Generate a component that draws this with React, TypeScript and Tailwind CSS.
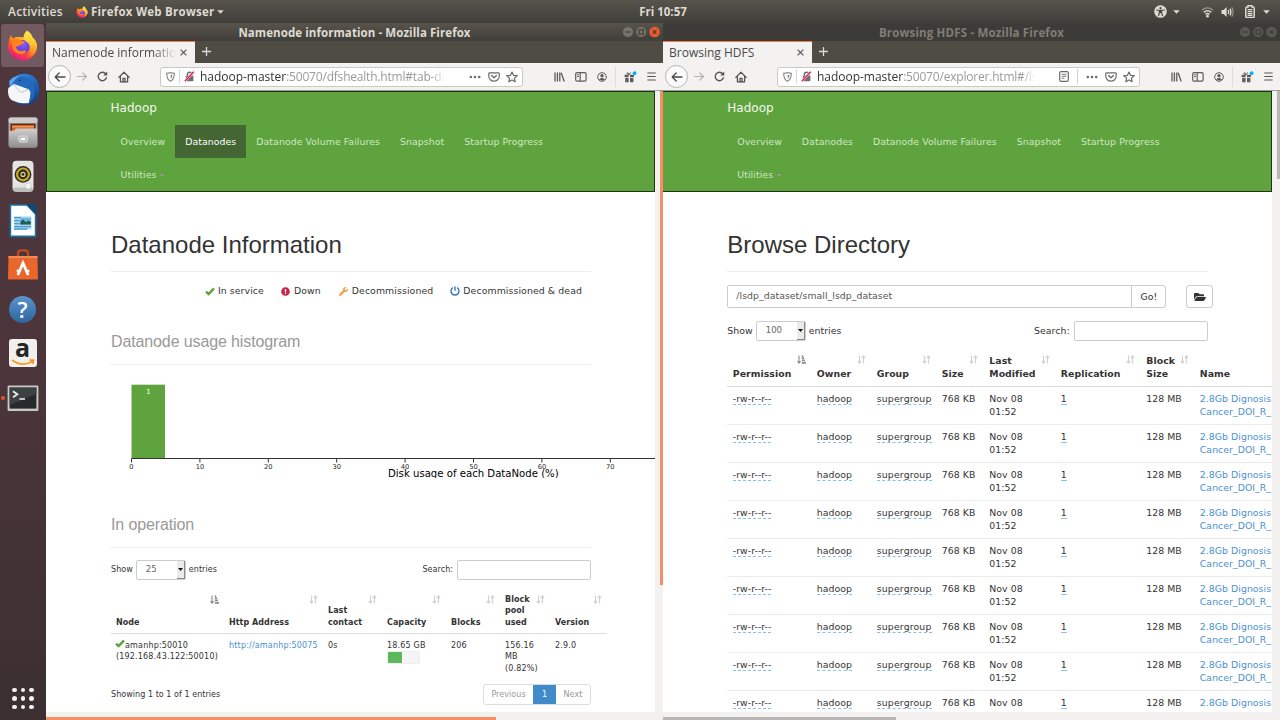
import React from "react";
import { FaExclamationCircle, FaWrench, FaFolderOpen } from "react-icons/fa";

type Kids = { children?: React.ReactNode };

/* ---------- small glyphs ---------- */

function SortBoth() {
  return (
    <svg width="9" height="9" viewBox="0 0 9 9" fill="none" stroke="#d2d2d2" strokeWidth="1.2">
      <path d="M2.5 0.5V8M0.8 6L2.5 8L4.2 6M6.5 8.5V1M4.8 3L6.5 1L8.2 3" />
    </svg>
  );
}

function SortAsc() {
  return (
    <svg width="9" height="9" viewBox="0 0 9 9" fill="none" stroke="#8d8d8d" strokeWidth="1.1">
      <path d="M2 0.5V8M0.4 6.2L2 8.2L3.6 6.2" />
      <path d="M4.8 1.2H6.2M4.8 3.2H7M4.8 5.4H8M4.8 7.8H9" strokeWidth="1.7" />
    </svg>
  );
}

function Tick({ className }: { className: string }) {
  return (
    <svg width="10" height="9" viewBox="0 0 10 9" className={className} fill="none" stroke="#5fa33e" strokeWidth="2.4">
      <path d="M1 4.6L3.6 7L9 1.4" />
    </svg>
  );
}

function Power({ className }: { className: string }) {
  return (
    <svg width="10" height="10" viewBox="0 0 10 10" className={className} fill="none" stroke="#3478b4" strokeWidth="1.4">
      <path d="M2.8 1.7A4 4 0 1 0 7.2 1.7M5 0.4V4.8" />
    </svg>
  );
}

function Back() {
  return (
    <svg width="12" height="12" viewBox="0 0 12 12" fill="none" stroke="#4a4a4a" strokeWidth="1.3" strokeLinecap="round" strokeLinejoin="round">
      <path d="M11 6H1.4M5.2 2L1.2 6L5.2 10" />
    </svg>
  );
}

function Forward() {
  return (
    <svg width="12" height="11" viewBox="0 0 12 12" fill="none" stroke="#b3b2b0" strokeWidth="1.3" strokeLinecap="round" strokeLinejoin="round">
      <path d="M1 6H10.6M6.8 2L10.8 6L6.8 10" />
    </svg>
  );
}

function Reload() {
  return (
    <svg width="11" height="11" viewBox="0 0 12 12" fill="none" stroke="#555" strokeWidth="1.5" strokeLinecap="round">
      <path d="M10.3 7.4A4.6 4.6 0 1 1 9.6 3.2" />
      <path d="M11.2 0.6V5H6.8Z" fill="#555" stroke="none" />
    </svg>
  );
}

function Home() {
  return (
    <svg width="12" height="12" viewBox="0 0 12 12" fill="none" stroke="#555" strokeWidth="1.3" strokeLinecap="round" strokeLinejoin="round">
      <path d="M0.8 6.4L6 1.2L11.2 6.4M2.4 5.6V10.9H9.6V5.6" />
      <path d="M5 10.8V7.4H7V10.8" />
    </svg>
  );
}

function Shield() {
  return (
    <svg width="9" height="10" viewBox="0 0 9 10" fill="none" stroke="#858585" strokeWidth="1.1">
      <path d="M0.7 1.2C2.6 1.2 3.4 0.9 4.5 0.6C5.6 0.9 6.4 1.2 8.3 1.2C8.3 5.6 7.5 7.8 4.5 9.3C1.5 7.8 0.7 5.6 0.7 1.2Z" />
      <path d="M4.7 2.8V6.9C5.9 6 6.3 4.8 6.4 3.1Z" fill="#858585" stroke="none" />
    </svg>
  );
}

function LockSlash() {
  return (
    <svg width="11" height="11" viewBox="0 0 11 11" fill="none">
      <rect x="1.8" y="4.8" width="7.6" height="5.4" rx="0.8" fill="#6f6f6f" />
      <path d="M3.4 5V3.4A2.2 2.2 0 0 1 7.8 3.4V5" stroke="#6f6f6f" strokeWidth="1.4" />
      <path d="M0.8 10.2L9.8 0.8" stroke="#ffffff" strokeWidth="2.2" />
      <path d="M0.8 10.2L9.8 0.8" stroke="#f0134f" strokeWidth="1.4" />
    </svg>
  );
}

function Dots() {
  return (
    <svg width="12" height="4" viewBox="0 0 12 4" fill="#6b6b6b">
      <circle cx="1.8" cy="2" r="1.3" />
      <circle cx="6" cy="2" r="1.3" />
      <circle cx="10.2" cy="2" r="1.3" />
    </svg>
  );
}

function Pocket() {
  return (
    <svg width="12" height="10" viewBox="0 0 12 10" fill="none" stroke="#6b6b6b" strokeWidth="1.2" strokeLinecap="round" strokeLinejoin="round">
      <path d="M1.6 0.8H10.4Q11.2 0.8 11.2 1.6V4.2A5.2 5 0 0 1 0.8 4.2V1.6Q0.8 0.8 1.6 0.8Z" />
      <path d="M3.6 3.6L6 5.8L8.4 3.6" strokeWidth="1.4" />
    </svg>
  );
}

function Star() {
  return (
    <svg width="12" height="12" viewBox="0 0 12 12" fill="none" stroke="#6b6b6b" strokeWidth="1.2" strokeLinejoin="round">
      <path d="M6 1L7.5 4.3L11.2 4.7L8.4 7.1L9.2 10.8L6 8.9L2.8 10.8L3.6 7.1L0.8 4.7L4.5 4.3Z" />
    </svg>
  );
}

function Reader() {
  return (
    <svg width="10" height="11" viewBox="0 0 10 11" fill="none" stroke="#6b6b6b" strokeWidth="1.2">
      <rect x="0.7" y="0.7" width="8.6" height="9.6" rx="1.2" />
      <path d="M2.6 3.3H7.4M2.6 5.3H7.4M2.6 7.3H5.4" strokeWidth="0.9" />
    </svg>
  );
}

function Library() {
  return (
    <svg width="11" height="10" viewBox="0 0 11 10" fill="none" stroke="#5c5c5c" strokeWidth="1.3">
      <path d="M1 0.5V9.5M3.4 0.5V9.5M5.8 0.5V9.5M7.2 0.8L10.2 9.5" />
    </svg>
  );
}

function SidebarIcon() {
  return (
    <svg width="12" height="10" viewBox="0 0 12 10" fill="none" stroke="#5c5c5c" strokeWidth="1.2">
      <rect x="0.7" y="0.7" width="10.4" height="8.4" rx="1.4" />
      <path d="M5.2 0.8V9" />
      <path d="M2 2.8H4M2 4.6H4" strokeWidth="0.9" />
    </svg>
  );
}

function Account() {
  return (
    <svg width="10" height="10" viewBox="0 0 10 10" fill="none">
      <circle cx="5" cy="5" r="4.3" stroke="#5c5c5c" strokeWidth="1" />
      <circle cx="5" cy="3.8" r="1.7" fill="#5c5c5c" />
      <path d="M2 7.4Q5 4.6 8 7.4Q5 9.6 2 7.4Z" fill="#5c5c5c" />
    </svg>
  );
}

function Gift() {
  return (
    <svg width="13" height="12" viewBox="0 0 13 12">
      <path d="M0.6 3.8H4.6V6H0.6ZM6 3.8H10V6H6ZM1.2 6.8H4.6V11.2H1.2ZM6 6.8H9.4V11.2H6Z" fill="#5c5c5c" />
      <path d="M5.2 3.6C3.4 3.6 2.6 2.8 3 2C3.6 1.2 4.8 2 5.2 3.6ZM5.3 3.6C5.6 2 6.4 1.6 7 2" fill="none" stroke="#5c5c5c" strokeWidth="1" />
      <circle cx="10.6" cy="2.2" r="1.9" fill="#00b0ff" />
    </svg>
  );
}

function Menu() {
  return (
    <svg width="9" height="9" viewBox="0 0 9 9" stroke="#555" strokeWidth="1.2">
      <path d="M0.3 1H8.7M0.3 4.5H8.7M0.3 8H8.7" />
    </svg>
  );
}

function Caret({ className }: { className: string }) {
  return (
    <svg width="7" height="4" viewBox="0 0 7 4" className={className}>
      <path d="M0.2 0.3H6.8L3.5 3.8Z" fill="currentColor" />
    </svg>
  );
}

/* ---------- dock icons ---------- */

function FirefoxLogo({ size, id }: { size: number; id: string }) {
  return (
    <svg width={size} height={size} viewBox="0 0 32 32">
      <defs>
        <linearGradient id={id + "a"} x1="0.8" y1="0.05" x2="0.25" y2="0.95">
          <stop offset="0" stopColor="#fff44f" />
          <stop offset="0.35" stopColor="#ff980e" />
          <stop offset="0.65" stopColor="#ff4440" />
          <stop offset="1" stopColor="#e5168a" />
        </linearGradient>
        <radialGradient id={id + "b"} cx="0.5" cy="0.3" r="0.8">
          <stop offset="0" stopColor="#9059ff" />
          <stop offset="1" stopColor="#4a3acc" />
        </radialGradient>
        <linearGradient id={id + "c"} x1="0.6" y1="0" x2="0.5" y2="1">
          <stop offset="0" stopColor="#fff44f" />
          <stop offset="0.5" stopColor="#ffc22c" />
          <stop offset="1" stopColor="#ff6a2a" />
        </linearGradient>
      </defs>
      <path d="M2 11C2.4 8.6 3.4 6.6 4.6 5.4C4.8 7 5.4 8 6.2 8.8C8 7.4 10 7 13 7.2L26 9C30 12 31.4 16 30.6 20C29 27 23 31.6 16 31.4C8 31 2 25.6 1.2 18.6C1 15.6 1.4 13.2 2 11Z" fill={`url(#${id}a)`} />
      <circle cx="16.4" cy="17.2" r="7" fill={`url(#${id}b)`} />
      <path d="M20.6 0.6C25 3.4 26 6.4 27 8.4C28.4 8.6 30.2 11.6 30.8 14.6C31.6 22 26.6 27.4 20.6 28.2C25 24.4 25.4 18.4 22.4 14.2C21.2 12.4 18.6 11.6 17.4 9.2C16.2 6.2 18.6 2.8 20.6 0.6Z" fill={`url(#${id}c)`} />
      <path d="M6.2 8.8C9.4 8.4 12.4 9.2 14.6 11.2C16.8 11.4 18.2 12.2 18 13.2C16.6 14.6 14.6 14.4 13.6 15.4C12.8 17.2 10.6 16.2 9 17.4C9.6 20.6 13 22.8 16.8 21.4C18.4 21 20 21.4 19.6 22.6C16.6 25.6 9.6 26 6.4 20C5 16 4.8 12 6.2 8.8Z" fill="#ff8420" />
    </svg>
  );
}

function Thunderbird() {
  return (
    <svg width="34" height="33" viewBox="0 0 34 33">
      <defs>
        <linearGradient id="tb" x1="0.3" y1="0" x2="0.7" y2="1">
          <stop offset="0" stopColor="#2f86dc" />
          <stop offset="1" stopColor="#123c8c" />
        </linearGradient>
      </defs>
      <path d="M9 4C14 -1 26 0 30 6C35 13 34 24 28 29C23 33 14 33 9 29L4 20C2 14 3 8 9 4Z" fill="url(#tb)" />
      <path d="M3 9C5 5 9 3 13 3C9 6 6 9 5 14Z" fill="#5aa8ee" />
      <path d="M2.4 15L8 11L22 16L25 19L23 30C15 31 7 29 3.6 25C2 22 1.6 18 2.4 15Z" fill="#f4f6f9" />
      <path d="M7.6 11.6L15 19.6L24 15.6" fill="none" stroke="#b8c0cc" strokeWidth="0.9" />
      <path d="M14 4C20 3 27 7 28 14C30 20 27 27 23 30C24 24 26 20 23 15.6C20 13 11 12 8 10.4C9 7 11 5 14 4Z" fill="#2468bd" />
      <circle cx="13.6" cy="7.4" r="0.9" fill="#103468" />
    </svg>
  );
}

function Files() {
  return (
    <svg width="32" height="33" viewBox="0 0 32 33">
      <defs>
        <linearGradient id="fl" x1="0" y1="0" x2="0" y2="1">
          <stop offset="0" stopColor="#cfcfcf" />
          <stop offset="1" stopColor="#8e8e8e" />
        </linearGradient>
      </defs>
      <rect x="1.5" y="0.5" width="29" height="30" rx="2.5" fill="#a9a9a9" />
      <rect x="1.5" y="0.5" width="29" height="5.4" rx="2" fill="#cccccc" />
      <rect x="3.5" y="6.6" width="25" height="8" fill="#5b2a12" />
      <rect x="5" y="8" width="22" height="6" fill="#d9631e" />
      <rect x="5" y="9.4" width="22" height="0.9" fill="#f3b98a" />
      <path d="M2 13.8H7L9 11.6H30V28.5Q30 30.5 28 30.5H4Q2 30.5 2 28.5Z" fill="url(#fl)" />
      <rect x="11.8" y="19" width="8.6" height="6" rx="1.4" fill="#b4b4b4" stroke="#e6e6e6" strokeWidth="0.9" />
      <rect x="13.6" y="20.8" width="4.8" height="2.4" fill="#fff" />
    </svg>
  );
}

function Rhythmbox() {
  return (
    <svg width="32" height="34" viewBox="0 0 32 34">
      <rect x="5.5" y="0.8" width="21" height="31" rx="4" fill="#e4e4e2" />
      <rect x="6" y="27.5" width="20" height="4" rx="2" fill="#bdbdbb" />
      <circle cx="16" cy="14.4" r="8.4" fill="#2a2a2c" />
      <circle cx="16" cy="14.4" r="5.9" fill="none" stroke="#c9a81d" strokeWidth="2.2" />
      <circle cx="16" cy="14.4" r="2.6" fill="#e9d778" />
      <circle cx="16" cy="14.4" r="1.4" fill="#2b2b2b" />
      <circle cx="21.2" cy="26" r="3" fill="#f5f5f5" stroke="#c4c4c4" strokeWidth="0.7" />
    </svg>
  );
}

function Writer() {
  return (
    <svg width="28" height="34" viewBox="0 0 28 34">
      <path d="M1.4 1H18L26.6 10V32.4H1.4Z" fill="#fff" stroke="#1c6ea4" strokeWidth="1.6" />
      <path d="M17.5 0.4H27.4V11Z" fill="#0f4a77" />
      <rect x="5.4" y="12.4" width="17" height="13" fill="#a9d4ee" />
      <path d="M5 13.6H12M5 16.6H10.6M5 19.6H10.6M5 22.6H22M5 25H18" stroke="#4a9ad0" strokeWidth="1.3" />
      <rect x="11.4" y="14" width="10.4" height="6.4" fill="#67b5e2" />
      <path d="M11.4 20.4V17.6L14 15.6L17 18.2L19.6 16.4L21.8 18V20.4Z" fill="#1f5d4e" />
    </svg>
  );
}

function Software() {
  return (
    <svg width="32" height="34" viewBox="0 0 32 34">
      <path d="M11 8V5.4Q11 2.4 14 2.4H18Q21 2.4 21 5.4V8" fill="none" stroke="#c04a20" strokeWidth="2.2" />
      <path d="M1.5 8H30.5L31 30.4Q31 31.4 30 31.4H2Q1 31.4 1 30.4Z" fill="#e9672c" />
      <path d="M1.5 8H30.5V10H1.5Z" fill="#f28a52" />
      <path d="M10.8 27L16 15L21.2 27" fill="none" stroke="#fff" strokeWidth="2.8" />
      <path d="M9.6 22.8H14M18 22.8H22.4" fill="none" stroke="#fff" strokeWidth="2" />
    </svg>
  );
}

function Terminal() {
  return (
    <svg width="32" height="27" viewBox="0 0 32 27">
      <rect x="0.6" y="0.6" width="30.8" height="25.4" rx="1" fill="#c8c8c6" />
      <rect x="2.6" y="2.6" width="26.8" height="21" fill="#262a2b" />
      <path d="M2.6 2.6H29.4V9L2.6 20Z" fill="#3c4142" />
      <path d="M6 6.2L10.4 9.2L6 12.2M12.4 14H18" fill="none" stroke="#f2f2f2" strokeWidth="1.7" />
    </svg>
  );
}

function DockItem({ children, active, dots = 0 }: Kids & { active?: boolean; dots?: number }) {
  return (
    <div className="flex h-[44px] w-full shrink-0 items-center">
      <div className="flex w-[2px] flex-col gap-[2px]">
        {Array.from({ length: dots }, (_, i) => (
          <span key={i} className="ml-[1px] size-[4px] rounded-full bg-[#e95420]" />
        ))}
      </div>
      <div className={active ? "-ml-[1px] flex h-[43px] w-[43px] items-center justify-center rounded-[3px] bg-[#715a60]" : "-ml-[1px] flex h-[43px] w-[43px] items-center justify-center"}>
        {children}
      </div>
    </div>
  );
}

function Dock() {
  return (
    <aside className="flex h-full w-[46px] shrink-0 flex-col bg-linear-to-b from-[#4f363d] via-[#4b353b] to-[#3b2f31]">
      <DockItem active dots={2}><FirefoxLogo size={31} id="ff1" /></DockItem>
      <DockItem><Thunderbird /></DockItem>
      <DockItem><Files /></DockItem>
      <DockItem><Rhythmbox /></DockItem>
      <DockItem><Writer /></DockItem>
      <DockItem><Software /></DockItem>
      <DockItem>
        <div className="flex size-[27px] items-center justify-center rounded-full bg-linear-to-b from-[#5d94cd] to-[#2d659f] font-['Open_Sans',sans-serif] text-[22px] leading-none font-semibold text-white">?</div>
      </DockItem>
      <DockItem>
        <div className="flex h-[28px] w-[28px] flex-col items-center rounded-[3px] bg-[#f1f0ef]">
          <span className="h-[20px] font-['Open_Sans',sans-serif] text-[25px] leading-[17px] font-bold text-[#262626]">a</span>
          <svg width="24" height="7" viewBox="0 0 24 7" fill="none" stroke="#f79a1c" strokeWidth="1.7">
            <path d="M1 1Q11 8.4 21.4 2.4M18.4 1.2L22.6 1.2L21.6 5" />
          </svg>
        </div>
      </DockItem>
      <div className="h-[1px]" />
      <DockItem dots={1}><Terminal /></DockItem>
      <div className="mt-auto mb-[11px] grid grid-cols-3 gap-[4px] self-start pl-[12px]">
        {Array.from({ length: 9 }, (_, i) => (
          <span key={i} className="size-[4.5px] rounded-full bg-[#f4f2f2]" />
        ))}
      </div>
    </aside>
  );
}

/* ---------- desktop bar ---------- */

function TopBar() {
  return (
    <header className="grid h-[23px] shrink-0 grid-cols-3 items-center bg-linear-to-b from-[#57544c] to-[#403e39] font-['Open_Sans',sans-serif] text-[11.5px] font-semibold text-[#dedad2]">
      <div className="flex items-center pl-[8px] whitespace-nowrap">
        <span className="w-[55px] text-[12px] tracking-[0.22px]">Activities</span>
        <span className="ml-[13px] flex"><FirefoxLogo size={12} id="ff2" /></span>
        <span className="ml-[3px] w-[124px] font-bold tracking-[0.24px]">Firefox Web Browser</span>
        <Caret className="ml-[2px] text-[#dedad2]" />
      </div>
      <div className="pl-[1px] pr-[-20px] text-center font-bold"><span className="ml-[45px]">Fri 10:57</span></div>
      <div className="flex items-center justify-end pr-[10px]">
        <svg width="13" height="13" viewBox="0 0 13 13">
          <circle cx="6.5" cy="6.5" r="6.3" fill="#dedad2" />
          <circle cx="6.5" cy="3.2" r="1.1" fill="#474540" />
          <path d="M2.8 5L5.4 5.4V7.4L4.6 10.6M10.2 5L7.6 5.4V7.4L8.4 10.6M5.2 5.7H7.8M6.5 5V7.6" fill="none" stroke="#474540" strokeWidth="1.2" strokeLinecap="round" />
        </svg>
        <Caret className="ml-[6px] text-[#dedad2]" />
        <svg width="13" height="12" viewBox="0 0 13 12" className="ml-[21px]" fill="none" stroke="#dedad2" strokeWidth="1.4">
          <path d="M1 4.2Q6.5 -0.4 12 4.2" opacity="0.5" />
          <path d="M2.8 6.4Q6.5 3.2 10.2 6.4M4.6 8.4Q6.5 6.8 8.4 8.4" />
          <circle cx="6.5" cy="10.2" r="1.4" fill="#dedad2" stroke="none" />
        </svg>
        <svg width="13" height="12" viewBox="0 0 13 12" className="ml-[7px]">
          <path d="M0.5 4H2.6L5.6 1V11L2.6 8H0.5Z" fill="#dedad2" />
          <path d="M7.2 4Q8.2 6 7.2 8M9 2.6Q10.8 6 9 9.4" fill="none" stroke="#dedad2" strokeWidth="1.3" />
          <path d="M10.8 1.2Q13.4 6 10.8 10.8" fill="none" stroke="#dedad2" strokeWidth="1.2" opacity="0.5" />
        </svg>
        <svg width="10" height="13" viewBox="0 0 10 13" className="ml-[11px]">
          <path d="M1.8 2H3V0.8H7V2H8.2Q9.2 2 9.2 3V11.4Q9.2 12.4 8.2 12.4H1.8Q0.8 12.4 0.8 11.4V3Q0.8 2 1.8 2Z" fill="none" stroke="#dedad2" strokeWidth="1.5" />
          <path d="M2.6 4.6H7.4M2.6 6.6H7.4M2.6 8.6H7.4M2.6 10.4H7.4" stroke="#dedad2" strokeWidth="1.2" />
        </svg>
        <Caret className="ml-[8px] text-[#dedad2]" />
      </div>
    </header>
  );
}

/* ---------- browser window ---------- */

function WindowButtons({ active }: { active: boolean }) {
  const disc = active ? "#77746c" : "#5b5954";
  const line = "#3b3a36";
  return (
    <svg width="38" height="12" viewBox="0 0 38 12" fill="none" stroke={line} strokeWidth="1.1">
      <circle cx="6" cy="6" r="5.1" fill={disc} stroke="none" />
      <path d="M3.5 6H8.5" />
      <circle cx="19.2" cy="6" r="5.1" fill={disc} stroke="none" />
      <rect x="17" y="3.8" width="4.4" height="4.4" />
      <circle cx="32.6" cy="6" r="5.3" fill={active ? "#ee5a2c" : disc} stroke="none" />
      <path d="M30.8 4.2L34.4 7.8M34.4 4.2L30.8 7.8" />
    </svg>
  );
}

type BrowserProps = Kids & {
  active: boolean;
  title: string;
  tab: string;
  path: string;
  reader?: boolean;
};

function Slot({ w, children }: Kids & { w: string }) {
  return <span className={"flex shrink-0 items-center justify-center " + w}>{children}</span>;
}

function Browser({ active, title, tab, path, reader, children }: BrowserProps) {
  return (
    <section className="flex w-[617px] shrink-0 flex-col overflow-hidden font-['Open_Sans',sans-serif]">
      <div className={active ? "flex h-[18px] shrink-0 items-center bg-linear-to-b from-[#57544c] to-[#403e39] text-[#dfdbd2]" : "flex h-[18px] shrink-0 items-center bg-[#3c3b37] text-[#807d76]"}>
        <span className="w-[41px]" />
        <span className={active ? "flex-1 pt-[2px] text-center text-[11.5px] leading-none font-bold tracking-[0.08px] whitespace-nowrap" : "flex-1 pt-[2px] text-center text-[11.5px] leading-none font-bold tracking-[0.17px] whitespace-nowrap"}>{title}</span>
        <span className="flex w-[41px] items-center"><WindowButtons active={active} /></span>
      </div>

      <div className="flex h-[22px] shrink-0 bg-[#4f4c44]">
        <div className="flex h-full w-[149px] items-center border-t-[1.5px] border-[#f0794a] bg-[#f3f2f1] pl-[6px]">
          <span className={active ? "w-[125px] overflow-hidden text-[12px] whitespace-nowrap text-[#4a4a4a] [mask-image:linear-gradient(to_right,#000_80%,transparent_100%)]" : "w-[125px] overflow-hidden text-[12px] whitespace-nowrap text-[#4a4a4a]"}>{tab}</span>
          <svg width="7" height="7" viewBox="0 0 7 7" className="ml-[3px]" stroke="#555" strokeWidth="1.2"><path d="M0.6 0.6L6.4 6.4M6.4 0.6L0.6 6.4" /></svg>
        </div>
        <svg width="9" height="9" viewBox="0 0 9 9" className="mt-[6px] ml-[7px]" stroke="#dcd9d2" strokeWidth="1.3"><path d="M4.5 0V9M0 4.5H9" /></svg>
      </div>

      <div className="flex h-[27px] shrink-0 items-center bg-[#f3f2f1]">
        <span className="ml-[2px] flex size-[23px] shrink-0 items-center justify-center rounded-full border border-[#b5b4b2] bg-[#fbfbfb]"><Back /></span>
        <Slot w="w-[21px]"><Forward /></Slot>
        <Slot w="w-[21px]"><Reload /></Slot>
        <Slot w="w-[21px]"><Home /></Slot>
        <div className="ml-[26px] flex h-[20px] w-[363px] shrink-0 items-center rounded-[3px] border border-[#cac9c7] bg-white pl-[3px]">
          <Slot w="w-[12px]"><Shield /></Slot>
          <span className="mx-[3px] h-[15px] w-px bg-[#d8d8d8]" />
          <Slot w="w-[13px]"><LockSlash /></Slot>
          <span className={reader ? "ml-[4px] w-[218px] shrink-0 overflow-hidden text-[12px] tracking-[-0.02px] whitespace-nowrap text-[#9a9a9a] [mask-image:linear-gradient(to_right,#000_94%,transparent_100%)]" : "ml-[4px] w-[245px] shrink-0 overflow-hidden text-[12px] tracking-[-0.02px] whitespace-nowrap text-[#9a9a9a] [mask-image:linear-gradient(to_right,#000_94%,transparent_100%)]"}>
            <span className="text-[#333]">hadoop-master</span><span className="tracking-[-0.2px]">{path}</span>
          </span>
          <span className="flex-1" />
          {reader && (
            <>
              <Reader />
              <span className="mx-[8px] h-[15px] w-px bg-[#d0d0d0]" />
            </>
          )}
          <Dots />
          <Slot w="w-[25px]"><Pocket /></Slot>
          <Star />
          <span className="w-[4px]" />
        </div>
        <Slot w="ml-[25px] w-[22px]"><Library /></Slot>
        <Slot w="w-[21px]"><SidebarIcon /></Slot>
        <Slot w="w-[21px]"><Account /></Slot>
        <span className="ml-[3px] h-[20px] w-px bg-[#dedddb]" />
        <Slot w="ml-[3px] w-[22px]"><Gift /></Slot>
        <Slot w="w-[20px]"><Menu /></Slot>
      </div>
      <div className="h-px shrink-0 bg-[#a09d98]" />

      <div className="flex h-[621px] shrink-0">
        <div className="w-[609px] shrink-0 overflow-hidden bg-white">{children}</div>
        <div className="flex w-[8px] justify-end bg-[#f2f1f0]">
          <div className={active ? "h-[494px] w-[3px] bg-[#f58e65]" : "h-[88px] w-[3px] bg-[#b9b7b5]"} />
        </div>
      </div>
      <div className="flex h-[8px] shrink-0 items-end bg-[#f2f1f0]">
        <div className={active ? "h-[3.4px] w-[450px] bg-[#f58e65]" : "h-[3.4px] w-[233px] bg-[#b9b7b5]"} />
      </div>
    </section>
  );
}

/* ---------- Hadoop pages ---------- */

function HadoopNav({ selected }: { selected?: string }) {
  const items = ["Overview", "Datanodes", "Datanode Volume Failures", "Snapshot", "Startup Progress"];
  return (
    <nav className={selected ? "flex h-[101px] flex-col border border-[#1c3414] bg-[#5fa33e] pl-[63.6px] text-[9.33px] tracking-[0.08px] text-[#cfe8c2]" : "flex h-[101px] flex-col border border-l-0 border-[#1c3414] bg-[#5fa33e] pl-[64.3px] text-[9.33px] tracking-[0.08px] text-[#cfe8c2]"}>
      <div className="h-[33px] pt-[8px] text-[12px] leading-[16px] tracking-normal text-[#f1f8ee]">Hadoop</div>
      <div className="flex h-[33px] items-center">
        {items.map((t) => (
          <span key={t} className={t === selected ? "flex h-[33px] items-center bg-[#446633] px-[10px] text-white" : "flex h-[33px] items-center px-[10px]"}>{t}</span>
        ))}
      </div>
      <div className="flex h-[33px] items-center px-[10px]">
        Utilities
        <Caret className="mt-px ml-[3px] h-[3px] w-[6px] text-[#a294ae]" />
      </div>
    </nav>
  );
}

function PageTitle({ children }: Kids) {
  return <h1 className="flex h-[80px] items-end border-b border-[#eeeeee] pb-[13px] font-['Liberation_Sans',sans-serif] text-[24px] leading-[26px] tracking-normal text-[#333]">{children}</h1>;
}

function SectionTitle({ children, tall }: Kids & { tall?: boolean }) {
  return (
    <h2 className={(tall ? "h-[68px]" : "h-[54px]") + " flex items-end border-b border-[#eeeeee] pb-[13px] font-['Liberation_Sans',sans-serif] text-[16px] leading-[18px] tracking-[-0.12px] text-[#999]"}>{children}</h2>
  );
}

function SelectBox({ value }: { value: string }) {
  return (
    <span className="mr-[3px] ml-[3px] flex h-[20px] w-[50px] items-center justify-between rounded-[2px] border border-[#cccccc] bg-white pl-[9px] text-[8.5px] text-[#666]">
      {value}
      <span className="flex h-full w-[8px] items-center justify-center border-r border-b border-[#8a8a8a] bg-[#ebebeb] text-black">
        <svg width="5" height="3" viewBox="0 0 5 3"><path d="M0 0H5L2.5 3Z" fill="#111" /></svg>
      </span>
    </span>
  );
}

function TableControls({ value }: { value: string }) {
  return (
    <div className="flex h-[20px] items-center">
      Show
      <SelectBox value={value} />
      entries
      <span className="flex-1" />
      Search:
      <span className="ml-[4px] h-[20px] w-[134px] rounded-[2px] border border-[#cccccc] bg-white" />
    </div>
  );
}

function Th({ children, sort }: Kids & { sort?: "asc" | "both" }) {
  return (
    <div className="flex items-end justify-between pr-[5px] pl-[5px] font-bold">
      <span className="shrink-0">{children}</span>
      {sort && <span className="-ml-[9px] shrink-0 self-start pt-[2px]">{sort === "asc" ? <SortAsc /> : <SortBoth />}</span>}
    </div>
  );
}

function Histogram() {
  const ticks = [0, 10, 20, 30, 40, 50, 60, 70];
  return (
    <svg width="544" height="113" viewBox="0 0 544 113" className="block" fontFamily="'DejaVu Sans', sans-serif">
      <rect x="20.5" y="19.7" width="33.5" height="73.8" fill="#5fa33e" />
      <text x="37.5" y="29" fontSize="6.8" fill="#fff" textAnchor="middle">1</text>
      <path d="M20.5 93.5H545" stroke="#333" strokeWidth="1" />
      {ticks.map((t) => (
        <g key={t}>
          <path d={`M${20.5 + t * 6.84} 93.5V97.5`} stroke="#333" strokeWidth="1" />
          <text x={20.5 + t * 6.84} y="103.5" fontSize="6.7" fill="#222" textAnchor="middle">{t}</text>
        </g>
      ))}
      <text x="277" y="112.3" fontSize="10.15" fill="#000">Disk usage of each DataNode (%)</text>
    </svg>
  );
}

const leftCols = "grid grid-cols-[113px_99px_59px_64px_54px_50px_57px]";

function DatanodePage() {
  return (
    <div className="font-['DejaVu_Sans',sans-serif] text-[#333]">
      <HadoopNav selected="Datanodes" />
      <main className="ml-[65px] w-[480px]">
        <PageTitle>Datanode Information</PageTitle>
        <div className="flex h-[39px] items-center justify-end pr-[9px] pb-px text-[9.33px] tracking-[0.1px]">
          <Tick className="mr-[3px]" />In service
          <FaExclamationCircle className="mr-[4px] ml-[17px] text-[9px] text-[#c7254e]" />Down
          <FaWrench className="mr-[4px] ml-[18px] text-[9px] text-[#f0a24a]" />Decommissioned
          <Power className="mr-[3px] ml-[17px]" />Decommissioned &amp; dead
        </div>
        <SectionTitle>Datanode usage histogram</SectionTitle>
        <div className="h-[115px] w-[544px]"><Histogram /></div>
        <SectionTitle tall>In operation</SectionTitle>
        <div className="pt-[12px] text-[8px] leading-[11.43px] tracking-[0.05px]">
          <TableControls value="25" />
          <div className={leftCols + " mt-[8px] h-[46px] w-[496px] border-b-[1.5px] border-[#dddddd] pt-[5.3px] pb-[5px]"}>
            <Th sort="asc">Node</Th>
            <Th sort="both">Http Address</Th>
            <Th sort="both">Last<br />contact</Th>
            <Th sort="both">Capacity</Th>
            <Th sort="both">Blocks</Th>
            <Th sort="both">Block<br />pool<br />used</Th>
            <Th sort="both">Version</Th>
          </div>
          <div className={leftCols + " h-[45px] w-[496px] pt-[6px] tracking-[0.18px] [&>div]:pl-[5px]"}>
            <div className="whitespace-nowrap"><Tick className="-mt-[4px] mr-0 -ml-px inline" />amanhp:50010<br />(192.168.43.122:50010)</div>
            <div className="text-[#4a90d2]">http://amanhp:50075</div>
            <div>0s</div>
            <div>
              18.65 GB
              <div className="flex h-[13px] w-[33px] overflow-hidden rounded-[2px] border border-[#eeeeee] bg-[#f5f5f5]">
                <div className="w-[14px] bg-[#5cb85c]" />
              </div>
            </div>
            <div>206</div>
            <div>156.16<br />MB<br />(0.82%)</div>
            <div>2.9.0</div>
          </div>
          <div className="mt-[5px] flex h-[21px] items-center justify-between">
            <span>Showing 1 to 1 of 1 entries</span>
            <div className="flex h-[21px] items-center overflow-hidden rounded-[3px] border border-[#dddddd] text-[#999]">
              <span className="flex w-[49px] justify-center">Previous</span>
              <span className="flex h-[21px] w-[23px] items-center justify-center bg-[#428bca] text-white">1</span>
              <span className="flex w-[34px] justify-center">Next</span>
            </div>
          </div>
        </div>
      </main>
    </div>
  );
}

const rightCols = "grid grid-cols-[84px_60px_65px_47.5px_71.5px_85.5px_53.5px_78px]";

function Editable({ children }: Kids) {
  return <span className="inline-block h-[13px] border-b border-dashed border-[#83c2ea]">{children}</span>;
}

function ExplorerPage() {
  return (
    <div className="font-['DejaVu_Sans',sans-serif] text-[9.33px] leading-[13.33px] tracking-[0.05px] text-[#333]">
      <HadoopNav />
      <main className="ml-[64.3px] w-[480.3px]">
        <PageTitle>Browse Directory</PageTitle>
        <div className="mt-[13px] flex h-[23px] w-[486px] items-center">
          <div className="flex h-full w-[405px] items-center rounded-l-[2px] border border-[#cccccc] pb-px pl-[8px] text-[#555]">/lsdp_dataset/small_lsdp_dataset</div>
          <div className="-ml-px flex h-full w-[35px] items-center justify-center rounded-r-[3px] border border-[#cccccc]">Go!</div>
          <div className="ml-auto flex h-full w-[27px] items-center justify-center rounded-[3px] border border-[#cccccc]"><FaFolderOpen className="text-[12px]" /></div>
        </div>
        <div className="mt-[13px]"><TableControls value="100" /></div>
        <div className={rightCols + " mt-[7px] h-[39px] w-[546px] border-b-[1.5px] border-[#dddddd] pt-[4.8px] pb-[5.8px] pl-[0.5px] [&>div]:pr-[6px]"}>
          <Th sort="asc">Permission</Th>
          <Th sort="both">Owner</Th>
          <Th sort="both">Group</Th>
          <Th sort="both">Size</Th>
          <Th sort="both">Last<br />Modified</Th>
          <Th sort="both">Replication</Th>
          <Th sort="both">Block<br />Size</Th>
          <Th>Name</Th>
        </div>
        {Array.from({ length: 9 }, (_, i) => (
          <div key={i} className={rightCols + " h-[38px] w-[546px] border-b border-[#ececec] pt-[5.3px] pl-[0.5px] leading-[13px] whitespace-nowrap [&>div]:pl-[5px]"}>
            <div><Editable>-rw-r--r--</Editable></div>
            <div><Editable>hadoop</Editable></div>
            <div className="tracking-[0.15px]"><Editable>supergroup</Editable></div>
            <div>768 KB</div>
            <div>Nov 08<br />01:52</div>
            <div><Editable>1</Editable></div>
            <div>128 MB</div>
            <div className="text-[#4a90d2]">2.8Gb Dignosis<br />Cancer_DOI_R_</div>
          </div>
        ))}
      </main>
    </div>
  );
}

export default function App() {
  return (
    <div className="flex h-[720px] w-[1280px] flex-col overflow-hidden bg-[#3c3b37]">
      <TopBar />
      <div className="flex h-[697px]">
        <Dock />
        <Browser active title="Namenode information - Mozilla Firefox" tab="Namenode information" path=":50070/dfshealth.html#tab-datanode">
          <DatanodePage />
        </Browser>
        <Browser active={false} reader title="Browsing HDFS - Mozilla Firefox" tab="Browsing HDFS" path=":50070/explorer.html#/lsdp_dataset">
          <ExplorerPage />
        </Browser>
      </div>
    </div>
  );
}
